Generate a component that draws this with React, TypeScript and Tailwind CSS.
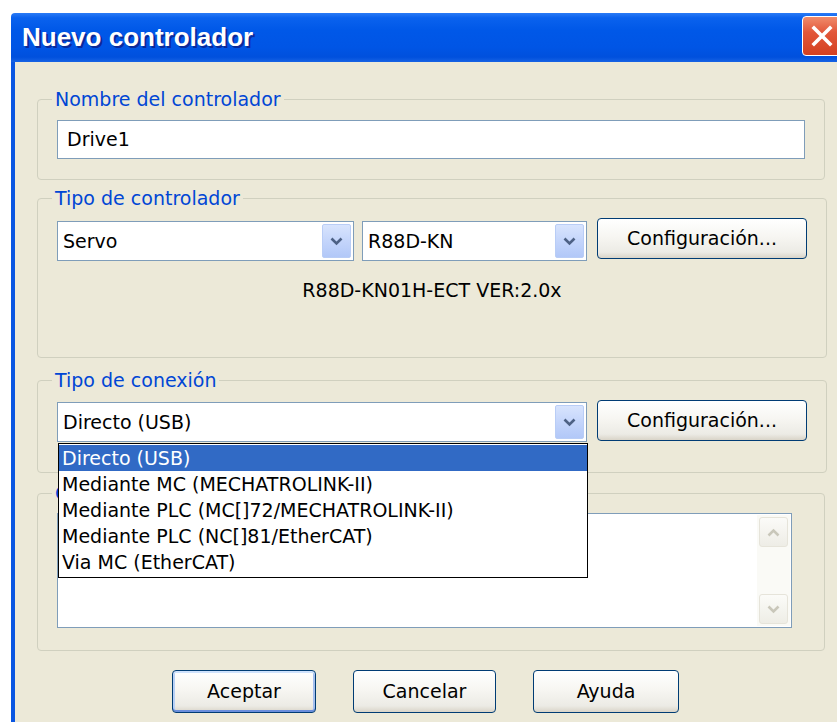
import type { ReactNode } from "react";

const ITEMS = [
  "Directo (USB)",
  "Mediante MC (MECHATROLINK-II)",
  "Mediante PLC (MC[]72/MECHATROLINK-II)",
  "Mediante PLC (NC[]81/EtherCAT)",
  "Via MC (EtherCAT)",
];

function Chevron({ up = false, color }: { up?: boolean; color: string }) {
  return (
    <svg width="13" height="9" viewBox="0 0 13 9" aria-hidden>
      <polyline
        points={up ? "1.5,7.5 6.5,2.5 11.5,7.5" : "1.5,1.5 6.5,6.5 11.5,1.5"}
        fill="none"
        stroke={color}
        strokeWidth="2.6"
      />
    </svg>
  );
}

function Combo({ value, className = "" }: { value: string; className?: string }) {
  return (
    <div className={`h-[40px] border border-[#7F9DB9] bg-white flex items-stretch ${className}`}>
      <span className="flex-1 flex items-center pl-[5px]">{value}</span>
      <span className="m-[2px] w-[29px] rounded-[2px] border border-[#B9CDF6] bg-[linear-gradient(180deg,#D8E4FD_0%,#C4D5FB_50%,#B2C8F8_100%)] flex items-center justify-center">
        <Chevron color="#4D6185" />
      </span>
    </div>
  );
}

function Button({
  children,
  className = "",
  primary = false,
}: {
  children: ReactNode;
  className?: string;
  primary?: boolean;
}) {
  return (
    <button
      className={[
        "border border-[#003C74] rounded-[4px] text-black bg-[linear-gradient(180deg,#FFFFFF_0%,#F7F6F2_45%,#ECEBE5_85%,#D9D4C8_100%)]",
        primary
          ? "shadow-[inset_0_2px_0_#CFE2FC,inset_0_-2px_0_#6A8EDC,inset_2px_0_0_#B8D0F5,inset_-2px_0_0_#A4BFEE]"
          : "",
        className,
      ].join(" ")}
    >
      {children}
    </button>
  );
}

function Group({
  label,
  className = "",
  children,
}: {
  label: string;
  className?: string;
  children: ReactNode;
}) {
  return (
    <fieldset className={`border border-[#D0D0BF] rounded-[4px] px-[19px] ${className}`}>
      <legend className="-ml-[5px] px-[3px] leading-[20px] text-[#0046D5]">{label}</legend>
      {children}
    </fieldset>
  );
}

function TitleBar() {
  return (
    <div className="h-[49px] flex items-start rounded-tl-[4px] bg-[linear-gradient(180deg,#2A7BF6_0%,#0A62EE_10%,#0058E8_35%,#0055E5_70%,#0050DD_90%,#1763E4_100%)]">
      <h1 className="flex-1 self-center pl-[11px] font-['Liberation_Sans',sans-serif] font-bold text-[26px] text-white [text-shadow:2px_2px_0_#0A2A9A]">
        Nuevo controlador
      </h1>
      <div className="mt-[3px] mr-[4px] w-[40px] h-[40px] rounded-[4px] border border-white bg-[linear-gradient(180deg,#F08B6B_0%,#E2573A_40%,#D44020_100%)] flex items-center justify-center">
        <svg width="24" height="24" viewBox="0 0 24 24" aria-hidden>
          <path d="M4 4 L20 20 M20 4 L4 20" stroke="#FFFFFF" strokeWidth="3.6" strokeLinecap="square" />
        </svg>
      </div>
    </div>
  );
}

export default function App() {
  return (
    <div className="w-[837px] h-[722px] overflow-hidden bg-white pt-[13px] pl-[11px] font-['DejaVu_Sans',sans-serif] text-[19px] text-black">
      <div className="w-[835px] h-[720px] flex flex-col">
        <TitleBar />
        <div className="flex-1 border-l-4 border-[#0A56E2] bg-[#ECE9D8] pl-[22px] pt-[27px]">
          <div className="w-[788px]">
            <Group label="Nombre del controlador" className="pb-[20px]">
              <div className="mt-[11px] h-[39px] border border-[#7F9DB9] bg-white flex items-center pl-[9px]">
                Drive1
              </div>
            </Group>

            <Group label="Tipo de controlador" className="mt-[8px] pb-[57px]">
              <div className="flex items-start">
                <Combo value="Servo" className="w-[297px] mt-[13px]" />
                <Combo value="R88D-KN" className="w-[225px] ml-[8px] mt-[13px]" />
                <Button className="w-[210px] h-[41px] ml-[10px] mt-[10px]">Configuración...</Button>
              </div>
              <p className="mt-[19px] leading-[20px] text-center">R88D-KN01H-ECT VER:2.0x</p>
            </Group>

            <Group label="Tipo de conexión" className="mt-[12px] pb-[30px] relative z-10">
              <div className="flex items-start">
                <div className="relative w-[530px] mt-[12px]">
                  <Combo value="Directo (USB)" className="w-full" />
                  {/* open list of the connection combo */}
                  <ul className="absolute left-[1px] top-full mt-[1px] w-[530px] border border-black bg-white pt-[1px] pb-[2px]">
                    {ITEMS.map((item, i) => (
                      <li
                        key={item}
                        className={`h-[26px] leading-[26px] pl-[3px] ${i === 0 ? "bg-[#316AC5] text-white" : ""}`}
                      >
                        {item}
                      </li>
                    ))}
                  </ul>
                </div>
                <Button className="w-[210px] h-[41px] ml-[10px] mt-[10px]">Configuración...</Button>
              </div>
            </Group>

            <Group label="Comentario" className="mt-[10px] pb-[22px]">
              <div className="mt-[10px] w-[735px] h-[115px] border border-[#7F9DB9] bg-white flex justify-end">
                <div className="w-[33px] mr-[1px] my-[1px] bg-[#FAFAF6] flex flex-col justify-between p-[2px]">
                  <span className="h-[30px] rounded-[3px] border border-[#E6E4DA] bg-[linear-gradient(180deg,#FBFBF8,#EEEDE6)] flex items-center justify-center">
                    <Chevron up color="#C9C7BA" />
                  </span>
                  <span className="h-[30px] rounded-[3px] border border-[#E6E4DA] bg-[linear-gradient(180deg,#FBFBF8,#EEEDE6)] flex items-center justify-center">
                    <Chevron color="#C9C7BA" />
                  </span>
                </div>
              </div>
            </Group>

            <div className="mt-[19px] ml-[135px] flex gap-[37px]">
              <Button primary className="w-[144px] h-[43px]">Aceptar</Button>
              <Button className="w-[143px] h-[43px]">Cancelar</Button>
              <Button className="w-[146px] h-[43px]">Ayuda</Button>
            </div>
          </div>
        </div>
      </div>
    </div>
  );
}
